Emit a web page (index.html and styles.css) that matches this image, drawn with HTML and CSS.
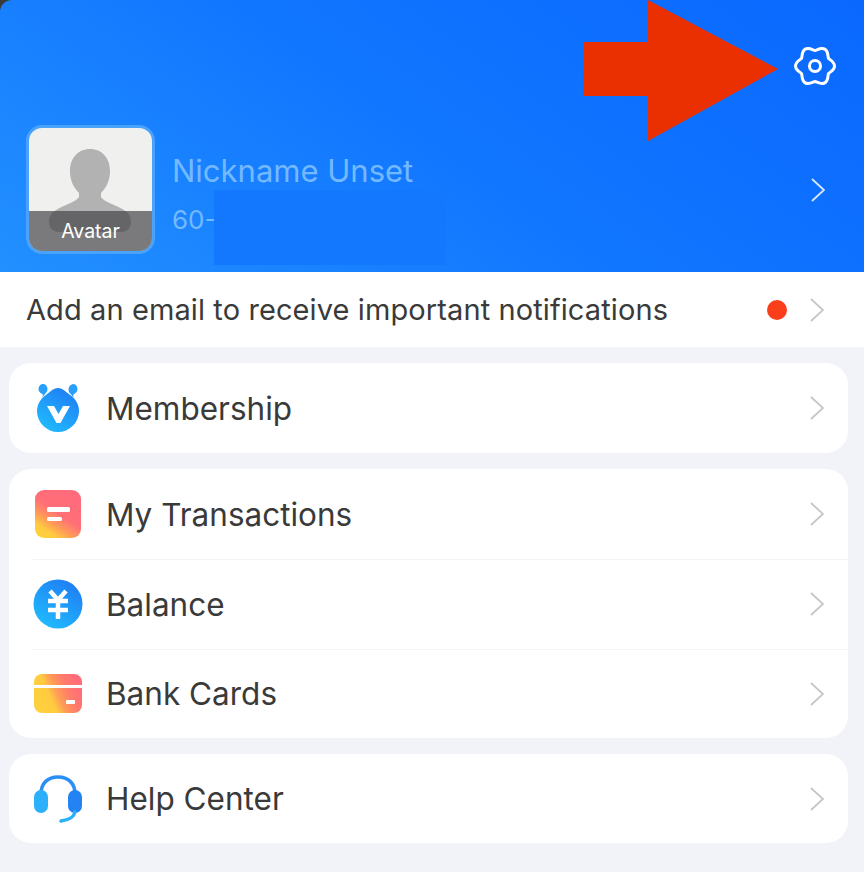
FILE: index.html
```html
<!DOCTYPE html>
<html lang="en">
<head>
    <meta charset="UTF-8">
    <title>Account</title>
    <link rel="stylesheet" href="styles.css">
</head>
<body>
<svg width="0" height="0" class="defs">
    <defs>
        <symbol id="chevron" viewBox="0 0 14 24">
            <path d="M1 1l12 11L1 23" fill="none" stroke-width="1.8"/>
        </symbol>
        <linearGradient id="blueGrad" x1="0.8" y1="0" x2="0.2" y2="1">
            <stop offset="0" stop-color="#1f7cf4"/>
            <stop offset="1" stop-color="#20bdfd"/>
        </linearGradient>
        <linearGradient id="warmGrad" x1="0.7" y1="0.1" x2="0.15" y2="0.95">
            <stop offset="0" stop-color="#ff6b7c"/>
            <stop offset="0.42" stop-color="#ff6f76"/>
            <stop offset="0.66" stop-color="#ff9a58"/>
            <stop offset="0.86" stop-color="#ffcb40"/>
            <stop offset="1" stop-color="#ffd03e"/>
        </linearGradient>
        <linearGradient id="cardGrad" gradientUnits="userSpaceOnUse" x1="46" y1="12" x2="6" y2="30">
            <stop offset="0" stop-color="#ff6b7c"/>
            <stop offset="0.3" stop-color="#ff7a6c"/>
            <stop offset="0.55" stop-color="#ff9a58"/>
            <stop offset="0.75" stop-color="#ffcb40"/>
            <stop offset="1" stop-color="#ffd03e"/>
        </linearGradient>
    </defs>
</svg>

<div class="top">
    <header class="profile">
        <svg class="callout" width="200" height="145" viewBox="0 0 200 145">
            <polygon points="0,42 65,42 65,0 195,69 65,141 65,96 0,96" fill="#ea3000"/>
        </svg>
        <div class="settings">
            <svg width="42" height="42" viewBox="-1 -1 42 42" fill="none" stroke="#fff" stroke-width="3">
                <path d="M39.5 20C39.5 15.5 34.17 13.55 33.42 12.25C32.67 10.95 33.65 5.36 29.75 3.11C25.85 .86 21.5 4.5 20 4.5C18.5 4.5 14.15 .86 10.25 3.11C6.35 5.36 7.33 10.95 6.58 12.25C5.83 13.55 .5 15.5 .5 20C.5 24.5 5.83 26.45 6.58 27.75C7.33 29.05 6.35 34.64 10.25 36.89C14.15 39.14 18.5 35.5 20 35.5C21.5 35.5 25.85 39.14 29.75 36.89C33.65 34.64 32.67 29.05 33.42 27.75C34.17 26.45 39.5 24.5 39.5 20Z"/>
                <circle cx="20" cy="20" r="5.5"/>
            </svg>
        </div>
        <div class="user">
            <div class="avatar">
                <svg class="avatar-person" width="122" height="122" viewBox="0 0 122 122">
                    <path d="M61 21c-12 0-20 9-20 22 0 10 4 17 9 22v4c-3 5-15 8-23 13-5 3-7 7-7 12 0 6 4 10 10 10h62c6 0 10-4 10-10 0-5-2-9-7-12-8-5-20-8-23-13v-4c5-5 9-12 9-22 0-13-8-22-20-22z" fill="#b2b2b2"/>
                </svg>
                <div class="avatar-label">Avatar</div>
            </div>
            <div class="user-info">
                <div class="nickname">Nickname Unset</div>
                <div class="phone">60-</div>
            </div>
            <svg class="chevron chevron-light"><use href="#chevron"/></svg>
        </div>
        <div class="redacted"></div>
    </header>
</div>

<div class="notice">
    <span class="notice-text">Add an email to receive important notifications</span>
    <span class="dot"></span>
    <svg class="chevron"><use href="#chevron"/></svg>
</div>

<section class="card">
    <div class="row">
        <svg class="row-icon" viewBox="0 0 50 50">
            <path d="M25 5C30 5 33 9 37 12C43 16 46 22 46 28A21 21 0 0 1 4 28C4 22 7 16 13 12C17 9 20 5 25 5z" fill="url(#blueGrad)"/>
            <path d="M10 1c2.500 0 4.500 2 4.500 5 0 2.500-1.500 4-3 5.500-.500 1-1 1.500-2 2.500 0-1 .500-2 0-3C7 10 5.500 8.500 5.500 6 5.500 3 7.500 1 10 1zM40 1c2.500 0 4.500 2 4.500 5 0 2.500-1.500 4-4 5.500-.500 1 0 2 0 3-1-1-1.500-1.500-2-2.500-1.500-1.500-3-3-3-5.500 0-3 2-5 4.500-5.500z" fill="#28a0fb"/>
            <path d="M14 23h7l4.500 8 4.500-8h7l-9.500 17h-4z" fill="#fff"/>
        </svg>
        <span class="row-label">Membership</span>
        <svg class="chevron"><use href="#chevron"/></svg>
    </div>
</section>

<section class="card">
    <div class="row">
        <svg class="row-icon" viewBox="0 0 50 50">
            <rect x="2" y="1" width="46" height="48" rx="9" fill="url(#warmGrad)"/>
            <rect x="14" y="18" width="23" height="5" rx="1.5" fill="#fff"/>
            <rect x="14" y="28" width="15" height="4" rx="1.5" fill="#fff"/>
        </svg>
        <span class="row-label">My Transactions</span>
        <svg class="chevron"><use href="#chevron"/></svg>
    </div>
    <div class="row row-split">
        <svg class="row-icon" viewBox="0 0 50 50">
            <circle cx="25" cy="25" r="24.5" fill="url(#blueGrad)"/>
            <path d="M17 12l8 9 8-9M15 22h20M15 31h20M25 21v19" fill="none" stroke="#fff" stroke-width="4.5"/>
        </svg>
        <span class="row-label">Balance</span>
        <svg class="chevron"><use href="#chevron"/></svg>
    </div>
    <div class="row row-split">
        <svg class="row-icon" viewBox="0 0 50 50">
            <path d="M9 5h32a8 8 0 0 1 8 8v3H1v-3a8 8 0 0 1 8-8z" fill="url(#cardGrad)"/>
            <path d="M1 19h48v17a8 8 0 0 1-8 8H9a8 8 0 0 1-8-8z" fill="url(#cardGrad)"/>
            <rect x="33" y="31" width="9" height="4" rx="1" fill="#fff"/>
        </svg>
        <span class="row-label">Bank Cards</span>
        <svg class="chevron"><use href="#chevron"/></svg>
    </div>
</section>

<section class="card">
    <div class="row row-help">
        <svg class="row-icon" viewBox="0 0 50 50">
            <path d="M8 20C8 9 15 3 25 3s17 6 17 17" fill="none" stroke="#2a8ff5" stroke-width="3.5"/>
            <rect x="1" y="16" width="14" height="23" rx="7" fill="#2cb0fc"/>
            <rect x="35" y="16" width="14" height="23" rx="7" fill="#2483f3"/>
            <path d="M42 38c-1 5-6 8-14 9" fill="none" stroke="#2cb0fc" stroke-width="3.5" stroke-linecap="round"/>
        </svg>
        <span class="row-label">Help Center</span>
        <svg class="chevron"><use href="#chevron"/></svg>
    </div>
</section>
</body>
</html>
```

FILE: styles.css
```css
* {
    box-sizing: border-box;
}

body {
    margin: 0;
    height: 872px;
    overflow: hidden;
    background-color: #f1f3f9;
    font-family: "Inter", "Liberation Sans", sans-serif;
    color: #3a3a3a;
}

.defs {
    position: absolute;
}

.top {
    background-color: #3a3a3a;
}

.profile {
    position: relative;
    height: 272px;
    padding: 125px 39px 0 26px;
    border-top-left-radius: 12px;
    background: linear-gradient(215deg, #0a68ff 0%, #1176ff 50%, #2290ff 100%);
}

.callout {
    position: absolute;
    left: 583px;
    top: 0;
}

.settings {
    position: absolute;
    left: 794px;
    top: 45px;
    line-height: 0;
}

.user {
    display: flex;
    align-items: center;
}

.avatar {
    position: relative;
    width: 129px;
    height: 129px;
    border: 3.5px solid #4ba2fb;
    border-radius: 16px;
    background-color: #f0f0ef;
    overflow: hidden;
}

.avatar-person {
    display: block;
}

.avatar-label {
    position: absolute;
    left: 0;
    right: 0;
    bottom: 0;
    height: 40px;
    padding-top: 8px;
    background-color: rgba(60, 60, 66, 0.66);
    color: #fff;
    font-size: 19.5px;
    text-align: center;
}

.user-info {
    flex: 1;
    margin-left: 17px;
    padding-top: 8px;
}

.nickname {
    font-size: 31px;
    color: #74b9ff;
}

.phone {
    margin-top: 15px;
    font-size: 26px;
    color: #74b9ff;
}

.redacted {
    position: absolute;
    left: 214px;
    top: 190px;
    width: 232px;
    height: 75px;
    background-color: #1478ff;
}

.chevron {
    flex: none;
    width: 14px;
    height: 24px;
    stroke: #c6c6c6;
}

.chevron-light {
    stroke: #d8e9ff;
}

.notice {
    display: flex;
    align-items: center;
    height: 75px;
    padding: 0 40px 0 26px;
    background-color: #fff;
}

.notice-text {
    flex: 1;
    font-size: 29px;
    letter-spacing: 0.1px;
}

.dot {
    width: 20px;
    height: 20px;
    margin-right: 23px;
    border-radius: 50%;
    background-color: #fb3f1b;
}

.card {
    width: 839px;
    margin: 16px 0 0 9px;
    padding-left: 24px;
    border-radius: 22px;
    background-color: #fff;
}

.row {
    display: flex;
    align-items: center;
    height: 90px;
    padding-right: 24px;
}

.row-split {
    height: 89.5px;
    border-top: 1px solid #f4f4f4;
}

.row-help {
    height: 89px;
}

.row-icon {
    flex: none;
    width: 50px;
    height: 50px;
    margin-right: 23px;
}

.row-label {
    flex: 1;
    font-size: 31.5px;
}
```
